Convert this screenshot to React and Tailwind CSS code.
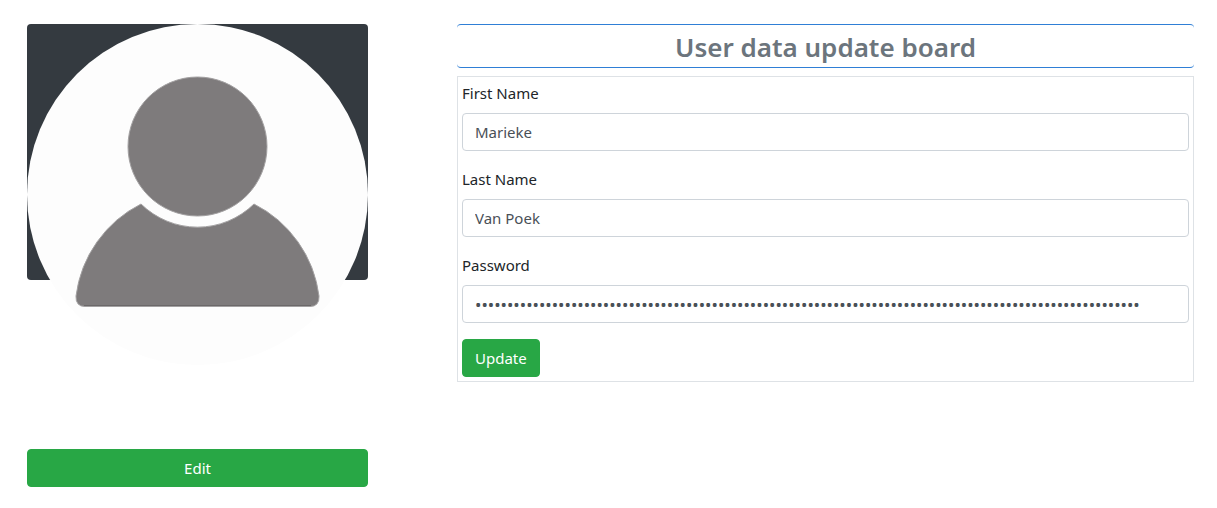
import React from "react";

const buttonClass =
  "h-[38px] rounded border border-[#28a745] bg-[#28a745] px-3 text-[15px] leading-6 text-white";

function Avatar() {
  return (
    <svg viewBox="0 0 341 341" className="block w-full" role="img" aria-label="Profile">
      <circle cx="170.5" cy="170.5" r="170.5" fill="#fdfdfd" />
      <g fill="#7e7b7c" stroke="#a3a1a2" strokeWidth="1">
        <circle cx="170.5" cy="122.5" r="69.5" />
        <path d="M114 180 A80.5 80.5 0 0 0 227 180 A120 120 0 0 1 292 272 Q292.500 282.500 283 282.500 H58 Q48.500 282.500 49 272 A120 120 0 0 1 114 180 Z" />
      </g>
      <path d="M57 281.500 H284" stroke="#6b6869" strokeWidth="1" />
    </svg>
  );
}

function Field({ id, label, type = "text", value, className = "text-[15px]" }) {
  return (
    <div className="mb-4">
      <label htmlFor={id} className="mb-2 block text-[15px] leading-6 text-[#212529]">
        {label}
      </label>
      <input
        id={id}
        type={type}
        defaultValue={value}
        className={`block h-[38px] w-full rounded border border-[#ced4da] bg-white px-3 text-[#495057] ${className}`}
      />
    </div>
  );
}

export default function App() {
  return (
    <main className="grid grid-cols-[341fr_737fr] items-start gap-x-[89px] py-6 pr-[23px] pl-[27px] font-['Noto_Sans',sans-serif]">
      <section>
        <div className="mb-[169px] h-64 rounded bg-[#343a40]">
          <Avatar />
        </div>
        <button type="button" className={`block w-full ${buttonClass}`}>
          Edit
        </button>
      </section>

      <section>
        <h1 className="mb-2 rounded border-y border-[#2f7fd6] pt-[5px] pb-[3px] text-center text-[26px] leading-[34px] font-semibold text-[#6c757d]">
          User data update board
        </h1>
        <form className="border border-[#dee2e6] p-1" onSubmit={(e) => e.preventDefault()}>
          <Field id="first-name" label="First Name" value="Marieke" />
          <Field id="last-name" label="Last Name" value="Van Poek" />
          <Field
            id="password"
            label="Password"
            type="password"
            value={"x".repeat(104)}
            className="text-[17px]"
          />
          <button type="submit" className={`block ${buttonClass}`}>
            Update
          </button>
        </form>
      </section>
    </main>
  );
}
